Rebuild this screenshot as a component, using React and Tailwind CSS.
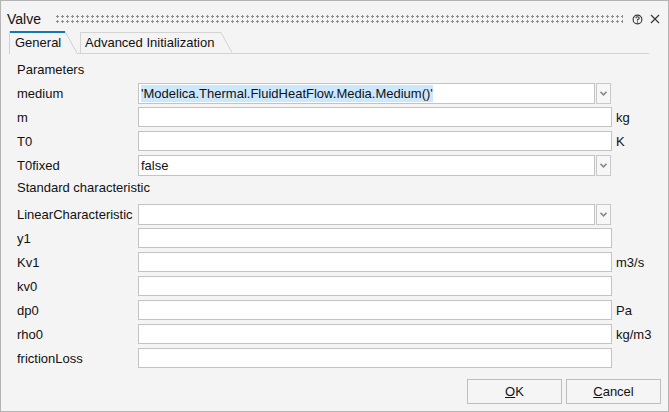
import React from 'react';

const font = { fontFamily: '"Liberation Sans", Arial, sans-serif' };

const params = [
  { label: 'medium', kind: 'combo', value: "'Modelica.Thermal.FluidHeatFlow.Media.Medium()'", selected: true },
  { label: 'm', kind: 'text', unit: 'kg' },
  { label: 'T0', kind: 'text', unit: 'K' },
  { label: 'T0fixed', kind: 'combo', value: 'false' },
];

const characteristic = [
  { label: 'LinearCharacteristic', kind: 'combo', value: '' },
  { label: 'y1', kind: 'text' },
  { label: 'Kv1', kind: 'text', unit: 'm3/s' },
  { label: 'kv0', kind: 'text' },
  { label: 'dp0', kind: 'text', unit: 'Pa' },
  { label: 'rho0', kind: 'text', unit: 'kg/m3' },
  { label: 'frictionLoss', kind: 'text' },
];

function Chevron() {
  return (
    <svg width="7" height="5" viewBox="0 0 7 5">
      <path d="M0.5 0.8 L3.5 3.8 L6.5 0.8" fill="none" stroke="#8a8a8a" strokeWidth="1.6" />
    </svg>
  );
}

function Field({ row }) {
  if (row.kind === 'combo') {
    return (
      <div className="flex w-[473px] h-[21px] shrink-0">
        <div className="flex-1 bg-white border border-[#c3c3c3] flex items-center px-[2px] overflow-hidden whitespace-nowrap">
          {row.value && (
            <span className={row.selected ? 'bg-[#cce8ff] leading-[17px]' : 'leading-[17px]'}>{row.value}</span>
          )}
        </div>
        <div className="w-[15px] ml-[1px] border border-[#c8c8c8] bg-[#f7f7f7] flex items-center justify-center">
          <Chevron />
        </div>
      </div>
    );
  }
  return <div className="w-[474px] h-[20px] shrink-0 bg-white border border-[#c3c3c3]" />;
}

function Row({ row }) {
  return (
    <div className="flex items-center h-[24px]">
      <div className="w-[121px] shrink-0 whitespace-nowrap pt-[1px]">{row.label}</div>
      <Field row={row} />
      {row.unit && <div className="ml-[4px] whitespace-nowrap pt-[1px]">{row.unit}</div>}
    </div>
  );
}

function Tab({ label, active, width }) {
  // outline drawn with svg so the right edge can slant like the reference
  const h = active ? 23 : 22;
  return (
    <div className="relative flex items-center shrink-0" style={{ width, height: h }}>
      <svg className="absolute inset-0" width={width} height={h}>
        {active ? (
          <>
            <path d={`M0.5 ${h} L0.5 0.5 L${width - 13} 0.5 L${width - 0.5} ${h}`} fill="#f4f4f4" stroke="#d0d0d0" />
            <rect x="1" y="0" width={width - 14} height="2" fill="#1479b0" />
          </>
        ) : (
          <path d={`M0.5 ${h} L0.5 0.5 L${width - 12} 0.5 L${width - 0.5} ${h - 0.5} L0 ${h - 0.5}`} fill="#f4f4f4" stroke="#d3d3d3" />
        )}
      </svg>
      <span className={active ? 'relative pl-[6px]' : 'relative pl-[5px]'}>{label}</span>
    </div>
  );
}

export default function App() {
  return (
    <div
      className="w-[669px] h-[412px] bg-[#f4f4f4] border border-[#b4b4b4] flex flex-col text-[13px] text-[#111] overflow-hidden"
      style={font}
    >
      {/* title bar */}
      <div className="flex items-center h-[18px] mt-[9px] pl-[6px] pr-[8px]">
        <span className="text-[14px] leading-[18px]">Valve</span>
        <div className="flex-1 h-[10px] ml-[14px] mr-[9px] bg-[radial-gradient(circle,#8f8f8f_1px,transparent_1.3px)] bg-[length:5px_5px]" />
        <svg width="11" height="11" viewBox="0 0 11 11" className="mr-[7px]">
          <circle cx="5.5" cy="5.5" r="4.4" fill="none" stroke="#333" strokeWidth="1.1" />
          <path d="M3.9 4.3 Q3.9 2.8 5.5 2.8 Q7.1 2.8 7.1 4.2 Q7.1 5.1 5.5 5.6 L5.5 6.6" fill="none" stroke="#333" strokeWidth="1.1" />
          <circle cx="5.5" cy="8" r="0.65" fill="#333" />
        </svg>
        <svg width="10" height="10" viewBox="0 0 10 10">
          <path d="M1 1 L9 9 M9 1 L1 9" stroke="#333" strokeWidth="1.1" />
        </svg>
      </div>

      {/* tabs */}
      <div className="flex items-end h-[23px] mt-[3px] pl-[8px]">
        <Tab label="General" active width={69} />
        <div className="w-[2px] self-stretch border-b border-[#d3d3d3]" />
        <Tab label="Advanced Initialization" width={153} />
        <div className="flex-1 self-stretch border-b border-[#d3d3d3] mr-[19px]" />
      </div>

      {/* panel */}
      <div className="flex flex-col pl-[16px] pt-[5px]">
        <div className="h-[22px] flex items-center">Parameters</div>
        {params.map((r) => (
          <Row key={r.label} row={r} />
        ))}
        <div className="h-[21px] mb-[4px] flex items-center">Standard characteristic</div>
        {characteristic.map((r) => (
          <Row key={r.label} row={r} />
        ))}
      </div>

      {/* buttons */}
      <div className="flex justify-end gap-[4px] mt-[9px] pr-[7px]">
        <button className="w-[95px] h-[25px] bg-[#f5f5f5] border border-[#bdbdbd]">
          <span className="underline">O</span>K
        </button>
        <button className="w-[95px] h-[25px] bg-[#f5f5f5] border border-[#bdbdbd]">
          <span className="underline">C</span>ancel
        </button>
      </div>
    </div>
  );
}
